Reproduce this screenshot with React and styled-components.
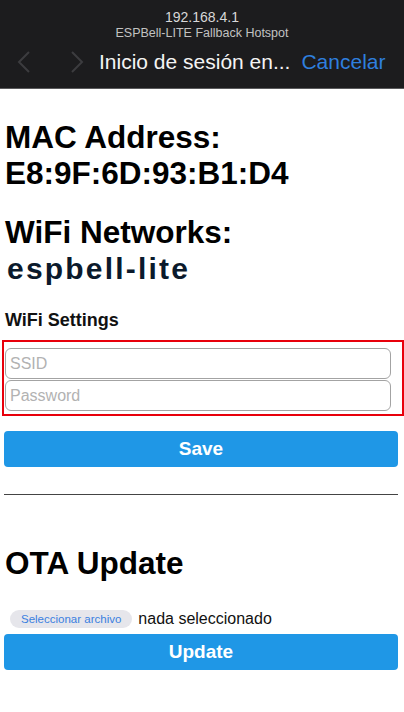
import React from "react";
import styled, { createGlobalStyle } from "styled-components";

const GlobalStyle = createGlobalStyle`
  html, body {
    margin: 0;
    padding: 0;
    background: #fff;
    font-family: "Liberation Sans", Arial, sans-serif;
  }
`;

const TopBar = styled.header`
  height: 88px;
  background: #1c1c1e;
  border-bottom: 1px solid #5a5a5c;
  display: flex;
  flex-direction: column;
  align-items: center;
`;

const Host = styled.div`
  margin-top: 9px;
  font-size: 14px;
  line-height: 17px;
  color: #d8d8d8;
`;

const Ssid = styled.div`
  font-size: 12.5px;
  line-height: 15px;
  color: #c2c2c2;
`;

const NavRow = styled.div`
  align-self: stretch;
  display: flex;
  align-items: center;
  height: 40px;
  margin-top: 1px;
  padding-left: 16px;
`;

const Chevron = styled.svg`
  width: 16px;
  height: 22px;
  margin-right: ${({ $gap }) => $gap}px;
`;

const NavTitle = styled.span`
  font-size: 21px;
  color: #f4f4f4;
  margin-right: 11px;
`;

const CancelLink = styled.span`
  font-size: 21px;
  color: #2f7fdf;
`;

const Content = styled.main`
  padding: 30px 6px 40px 4px;
`;

const BigHeading = styled.h1`
  margin: 0 0 ${({ $after }) => $after}px 1px;
  font-size: ${({ $size }) => $size}px;
  line-height: 36px;
  font-weight: bold;
  color: #000;
`;

const NetworkName = styled.div`
  margin: 0 0 25px 3px;
  font-size: 30px;
  line-height: 30px;
  font-weight: bold;
  letter-spacing: 2.2px;
  color: #0b1a2c;
`;

const SubHeading = styled.h3`
  margin: 0 0 9px 1px;
  font-size: 18px;
  line-height: 22px;
  font-weight: bold;
  color: #111;
`;

const Highlight = styled.div`
  margin: 0 -6px 0 -2px;
  border: 2px solid #e8000b;
  padding: 6px 11px 3px 1px;
  display: flex;
  flex-direction: column;
  gap: 1px;
`;

const TextInput = styled.input`
  box-sizing: border-box;
  height: 31px;
  border: 1px solid #a3a3a3;
  border-radius: 6px;
  padding: 0 4px;
  font-family: "Liberation Sans", Arial, sans-serif;
  font-size: 16px;
  background: #fff;
  &::placeholder {
    color: #b2b2b2;
  }
`;

const BlueButton = styled.button`
  display: block;
  width: 100%;
  height: 36px;
  margin-top: ${({ $top }) => $top}px;
  border: none;
  border-radius: 4px;
  background: #1f97e6;
  color: #fff;
  font-family: "Liberation Sans", Arial, sans-serif;
  font-size: 19px;
  font-weight: bold;
`;

const Divider = styled.hr`
  margin: 27px 0 50px;
  border: none;
  border-top: 1.5px solid #444;
`;

const FileRow = styled.div`
  display: flex;
  align-items: center;
  gap: 6px;
  margin: 29px 0 0 6px;
  height: 18px;
`;

const FileButton = styled.span`
  display: inline-flex;
  align-items: center;
  height: 18px;
  padding: 0 11px;
  border-radius: 9px;
  background: #e6e6eb;
  color: #3a7fe0;
  font-size: 11.5px;
`;

const FileName = styled.span`
  font-size: 16px;
  color: #111;
`;

export default function App() {
  return (
    <>
      <GlobalStyle />
      <TopBar>
        <Host>192.168.4.1</Host>
        <Ssid>ESPBell-LITE Fallback Hotspot</Ssid>
        <NavRow>
          <Chevron $gap={37} viewBox="0 0 16 22">
            <path d="M13 1 L3 11 L13 21" fill="none" stroke="#3c3c3f" strokeWidth="2" />
          </Chevron>
          <Chevron $gap={14} viewBox="0 0 16 22">
            <path d="M3 1 L13 11 L3 21" fill="none" stroke="#3c3c3f" strokeWidth="2" />
          </Chevron>
          <NavTitle>Inicio de sesión en...</NavTitle>
          <CancelLink>Cancelar</CancelLink>
        </NavRow>
      </TopBar>
      <Content>
        <BigHeading $size={31.5} $after={23}>
          MAC Address:
          <br />
          E8:9F:6D:93:B1:D4
        </BigHeading>
        <BigHeading $size={31.5} $after={4}>WiFi Networks:</BigHeading>
        <NetworkName>espbell-lite</NetworkName>
        <SubHeading>WiFi Settings</SubHeading>
        <Highlight>
          <TextInput placeholder="SSID" />
          <TextInput placeholder="Password" type="password" />
        </Highlight>
        <BlueButton $top={15}>Save</BlueButton>
        <Divider />
        <BigHeading $size={31.5} $after={0}>OTA Update</BigHeading>
        <FileRow>
          <FileButton>Seleccionar archivo</FileButton>
          <FileName>nada seleccionado</FileName>
        </FileRow>
        <BlueButton $top={6}>Update</BlueButton>
      </Content>
    </>
  );
}
